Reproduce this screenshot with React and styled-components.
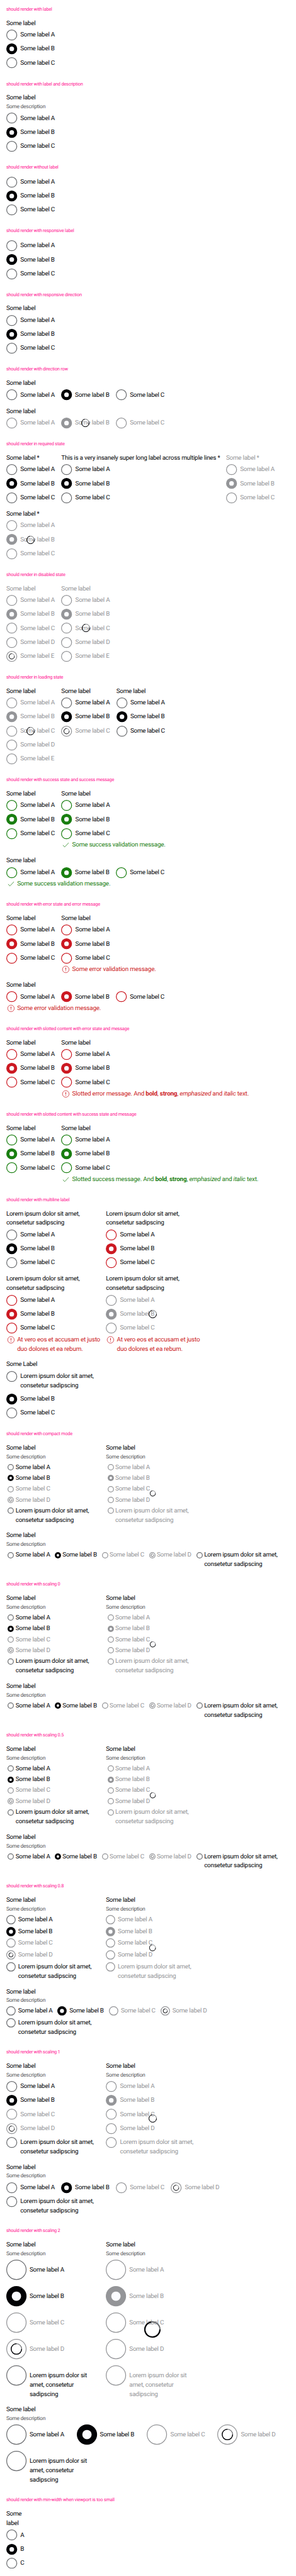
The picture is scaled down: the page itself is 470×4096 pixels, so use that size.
import React from "react";
import styled, { createGlobalStyle, css } from "styled-components";

const px = (n) => `${+(n * 0.6185).toFixed(3)}px`;

const color = {
  ink: "#010205",
  contrast: "#535457",
  border: "#6b6d70",
  disabled: "#949598",
  success: "#197e10",
  error: "#cc1922",
  dot: "#fbfcff",
};

const GlobalStyle = createGlobalStyle`
  html, body { margin: 0; background: #fff; }
  body {
    font-family: Roboto, "Liberation Sans", sans-serif;
    font-size: ${px(16)};
    line-height: ${px(24)};
    color: ${color.ink};
    letter-spacing: ${px(-0.38)};
    text-rendering: geometricPrecision;
  }
`;

/* Lowers the baseline inside a line box without changing the height it takes. */
const lowBaseline = css`
  padding-top: 1px;
  margin-bottom: -1px;
`;

const Page = styled.main`
  display: flex;
  flex-direction: column;
`;

const Section = styled.section`
  display: flex;
  flex-direction: column;
  gap: ${px(16)};
  padding: ${px(16)} ${px(16)} 0;
  margin-bottom: ${(p) => px(p.$trim ? 15 : 16)};
  &:last-child { margin-bottom: 0; }
`;

const Title = styled.h2`
  margin: 0;
  font-size: ${px(12)};
  line-height: ${px(16)};
  font-weight: 400;
  letter-spacing: ${px(-0.38)};
  color: deeppink;
  white-space: nowrap;
`;

const GroupRow = styled.div`
  display: flex;
  gap: ${px(16)};
`;

const Group = styled.fieldset`
  display: flex;
  flex-direction: column;
  gap: ${px(4)};
  flex: none;
  width: ${(p) => (p.$width ? px(p.$width) : "auto")};
  min-width: 0;
  margin: 0;
  padding: 0;
  border: 0;
  white-space: nowrap;
`;

const Heading = styled.div`
  display: flex;
  flex-direction: column;
`;

const Legend = styled.div`
  ${lowBaseline}
  color: ${(p) => (p.$disabled ? color.disabled : color.ink)};
`;

const Description = styled.div`
  ${lowBaseline}
  font-size: ${px(13.6)};
  line-height: ${px(22)};
  letter-spacing: ${px(-0.33)};
  color: ${color.contrast};
`;

const Options = styled.div`
  position: relative;
  display: flex;
  flex-flow: ${(p) => (p.$row ? "row wrap" : "column nowrap")};
  row-gap: ${(p) => px(p.$m.gap)};
  column-gap: ${(p) => px(p.$m.colGap)};
`;

const Option = styled.label`
  display: flex;
  align-items: flex-start;
  gap: ${(p) => px(p.$m.textGap)};
  color: ${(p) => (p.$disabled ? color.disabled : color.ink)};
`;

const Control = styled.span`
  display: flex;
  align-items: center;
  justify-content: center;
  flex: none;
  width: ${(p) => px(p.$m.box)};
  height: ${(p) => px(p.$m.box)};
`;

const OptionText = styled.span`
  padding-top: calc(${(p) => px((p.$m.box - 24) / 2)} + 1px);
  margin-bottom: -1px;
  width: ${(p) => (p.$width ? px(p.$width) : "auto")};
`;

const Drawing = styled.svg`
  display: block;
  flex: none;
  width: ${(p) => px(p.$size)};
  height: ${(p) => px(p.$size)};
  overflow: visible;
`;

const Overlay = styled.span`
  position: absolute;
  inset: 0;
  display: flex;
  align-items: center;
  justify-content: center;
`;

const Message = styled.div`
  display: flex;
  gap: ${px(4)};
  letter-spacing: ${px(-0.32)};
  color: ${(p) => color[p.$state]};
  b, strong { font-weight: 700; }
`;

const MessageText = styled.span`
  ${lowBaseline}
`;

const METRICS = {
  compact: { box: 24, size: 16, dot: 6.4, gap: 4, colGap: 8, textGap: 0, spin: 15, inner: 8 },
  small: { box: 24, size: 24, dot: 10.5, gap: 6.4, colGap: 12.8, textGap: 6.4, spin: 16.8, inner: 12 },
  normal: { box: 28, size: 28, dot: 12, gap: 8, colGap: 16, textGap: 8, spin: 21, inner: 15 },
  large: { box: 52, size: 52, dot: 24, gap: 16, colGap: 32, textGap: 8, spin: 42, inner: 29 },
};

const TEXT_WIDTH = { A: 88.5, B: 89, C: 89.1, D: 89.6, E: 88 };

function Spinner({ size }) {
  const w = size > 18 ? size * 0.075 : 1.3;
  const r = (size - w) / 2;
  const c = size / 2;
  const a = (-100 * Math.PI) / 180;
  return (
    <Drawing $size={size} viewBox={`0 0 ${size} ${size}`} fill="none" strokeWidth={w}>
      <circle cx={c} cy={c} r={r} stroke={color.border} />
      <path
        stroke={color.ink}
        d={`M${c + r} ${c}A${r} ${r} 0 1 1 ${c + r * Math.cos(a)} ${c + r * Math.sin(a)}`}
      />
    </Drawing>
  );
}

function Radio({ m, checked, loading, tone }) {
  const c = m.size / 2;
  return (
    <Control $m={m}>
      <Drawing $size={m.size} viewBox={`0 0 ${m.size} ${m.size}`}>
        {checked ? (
          <>
            <circle cx={c} cy={c} r={c} fill={tone} />
            <circle cx={c} cy={c} r={m.dot / 2} fill={color.dot} />
          </>
        ) : (
          <circle cx={c} cy={c} r={c - 1} fill="none" stroke={tone} strokeWidth="2" />
        )}
        {loading && (
          <svg x={c - m.inner / 2} y={c - m.inner / 2} width={m.inner} height={m.inner} overflow="visible">
            <InnerSpinner size={m.inner} />
          </svg>
        )}
      </Drawing>
    </Control>
  );
}

function InnerSpinner({ size }) {
  const w = size > 20 ? 2 : size > 10 ? 1.3 : 1;
  const r = (size - w) / 2;
  const c = size / 2;
  return (
    <g fill="none" strokeWidth={w}>
      <circle cx={c} cy={c} r={r} stroke={color.border} />
      <path
        stroke={size > 10 ? color.ink : color.border}
        d={`M${c + r} ${c}A${r} ${r} 0 1 1 ${c} ${c - r}`}
      />
    </g>
  );
}

function StateIcon({ state }) {
  return (
    <Drawing $size={24} viewBox="0 0 24 24" fill="none" stroke="currentColor" strokeWidth="1.2">
      {state === "success" ? (
        <path d="M4.6 12.8 9.4 17.4 19.5 6.6" />
      ) : (
        <>
          <circle cx="12" cy="12" r="8.5" />
          <path d="M12 7.5v5.6M12 14.8v1.7" strokeWidth="1.6" />
        </>
      )}
    </Drawing>
  );
}

const LOREM = ["Lorem ipsum dolor sit amet,", "consetetur sadipscing"];
const LOREM_NARROW = ["Lorem ipsum dolor sit", "amet, consetetur", "sadipscing"];

const Lines = ({ of }) =>
  of.map((line, i) => (
    <React.Fragment key={i}>
      {i > 0 && <br />}
      {line}
    </React.Fragment>
  ));

function RadioGroup({
  label = ["Some label"],
  description,
  options = "ABC",
  size = "normal",
  state,
  row,
  disabled,
  loading,
  disabledOptions = "",
  loadingOption,
  width,
  message,
  short,
}) {
  const m = METRICS[size];
  return (
    <Group $width={width}>
      {(label || description) && (
        <Heading>
          {label && (
            <Legend $disabled={disabled}>
              <Lines of={label} />
            </Legend>
          )}
          {description && <Description>Some description</Description>}
        </Heading>
      )}
      <Options $row={row} $m={m}>
        {[...options].map((key) => {
          const off = disabled || loading || disabledOptions.includes(key) || loadingOption === key;
          const checked = key === "B";
          const tone = off ? color.disabled : state ? color[state] : checked ? color.ink : color.border;
          const long = key === "L";
          return (
            <Option key={key} $m={m} $disabled={off}>
              <Radio m={m} checked={checked} loading={loadingOption === key} tone={tone} />
              <OptionText $m={m} $width={long || short ? 0 : TEXT_WIDTH[key]}>
                {long ? <Lines of={size === "large" ? LOREM_NARROW : LOREM} /> : short ? key : `Some label ${key}`}
              </OptionText>
            </Option>
          );
        })}
        {loading && (
          <Overlay>
            <Spinner size={m.spin} />
          </Overlay>
        )}
      </Options>
      {message && (
        <Message $state={state}>
          <StateIcon state={state} />
          <MessageText>{message}</MessageText>
        </Message>
      )}
    </Group>
  );
}

const Slotted = ({ kind }) => (
  <>
    Slotted {kind} message. And <b>bold</b>, <strong>strong</strong>, <em>emphasized</em> and <i>italic</i> text.
  </>
);

function Case({ title, trim, children }) {
  return (
    <Section $trim={trim}>
      <Title>should render {title}</Title>
      {children}
    </Section>
  );
}

function ScalingCase({ title, size, trim }) {
  const mixed = { size, description: true, options: "ABCDL", disabledOptions: "C", loadingOption: "D" };
  return (
    <Case title={title} trim={trim}>
      <GroupRow>
        <RadioGroup {...mixed} width={240} />
        <RadioGroup size={size} description options="ABCDL" loading width={240} />
      </GroupRow>
      <RadioGroup {...mixed} row width={728} />
    </Case>
  );
}

const REQUIRED = ["Some label *"];
const VERO = <Lines of={["At vero eos et accusam et justo", "duo dolores et ea rebum."]} />;

export default function App() {
  return (
    <>
      <GlobalStyle />
      <Page>
        <Case title="with label">
          <RadioGroup />
        </Case>
        <Case title="with label and description">
          <RadioGroup description />
        </Case>
        <Case title="without label">
          <RadioGroup label={null} />
        </Case>
        <Case title="with responsive label">
          <RadioGroup label={null} />
        </Case>
        <Case title="with responsive direction">
          <RadioGroup />
        </Case>
        <Case title="with direction row">
          <RadioGroup row />
          <RadioGroup row loading width={407.5} />
        </Case>
        <Case title="in required state">
          <GroupRow>
            <RadioGroup label={REQUIRED} width={125.3} />
            <RadioGroup label={["This is a very insanely super long label across multiple lines *"]} width={407} />
            <RadioGroup label={REQUIRED} disabled />
          </GroupRow>
          <RadioGroup label={REQUIRED} loading width={125.3} />
        </Case>
        <Case title="in disabled state">
          <GroupRow>
            <RadioGroup options="ABCDE" disabled loadingOption="E" width={125.3} />
            <RadioGroup options="ABCDE" disabled loading width={125.3} />
          </GroupRow>
        </Case>
        <Case title="in loading state">
          <GroupRow>
            <RadioGroup options="ABCDE" loading width={125.3} />
            <RadioGroup loadingOption="C" width={125.3} />
            <RadioGroup width={125.3} />
          </GroupRow>
        </Case>
        <Case title="with success state and success message">
          <GroupRow>
            <RadioGroup state="success" width={125.3} />
            <RadioGroup state="success" message="Some success validation message." />
          </GroupRow>
          <RadioGroup row state="success" message="Some success validation message." />
        </Case>
        <Case title="with error state and error message">
          <GroupRow>
            <RadioGroup state="error" width={125.3} />
            <RadioGroup state="error" message="Some error validation message." />
          </GroupRow>
          <RadioGroup row state="error" message="Some error validation message." />
        </Case>
        <Case title="with slotted content with error state and message">
          <GroupRow>
            <RadioGroup state="error" width={125.3} />
            <RadioGroup state="error" message={<Slotted kind="error" />} />
          </GroupRow>
        </Case>
        <Case title="with slotted content with success state and message">
          <GroupRow>
            <RadioGroup state="success" width={125.3} />
            <RadioGroup state="success" message={<Slotted kind="success" />} />
          </GroupRow>
        </Case>
        <Case title="with multiline label">
          <GroupRow>
            <RadioGroup label={LOREM} width={240} />
            <RadioGroup label={LOREM} state="error" width={240} />
          </GroupRow>
          <GroupRow>
            <RadioGroup label={LOREM} state="error" message={VERO} width={240} />
            <RadioGroup label={LOREM} state="error" loading message={VERO} width={240} />
          </GroupRow>
          <RadioGroup label={["Some Label"]} options="LBC" width={240} />
        </Case>
        <ScalingCase title="with compact mode" size="compact" trim />
        <ScalingCase title="with scaling 0" size="compact" />
        <ScalingCase title="with scaling 0.5" size="compact" />
        <ScalingCase title="with scaling 0.8" size="small" trim />
        <ScalingCase title="with scaling 1" size="normal" />
        <ScalingCase title="with scaling 2" size="large" />
        <Case title="with min-width when viewport is too small">
          <RadioGroup label={["Some", "label"]} short />
        </Case>
      </Page>
    </>
  );
}
